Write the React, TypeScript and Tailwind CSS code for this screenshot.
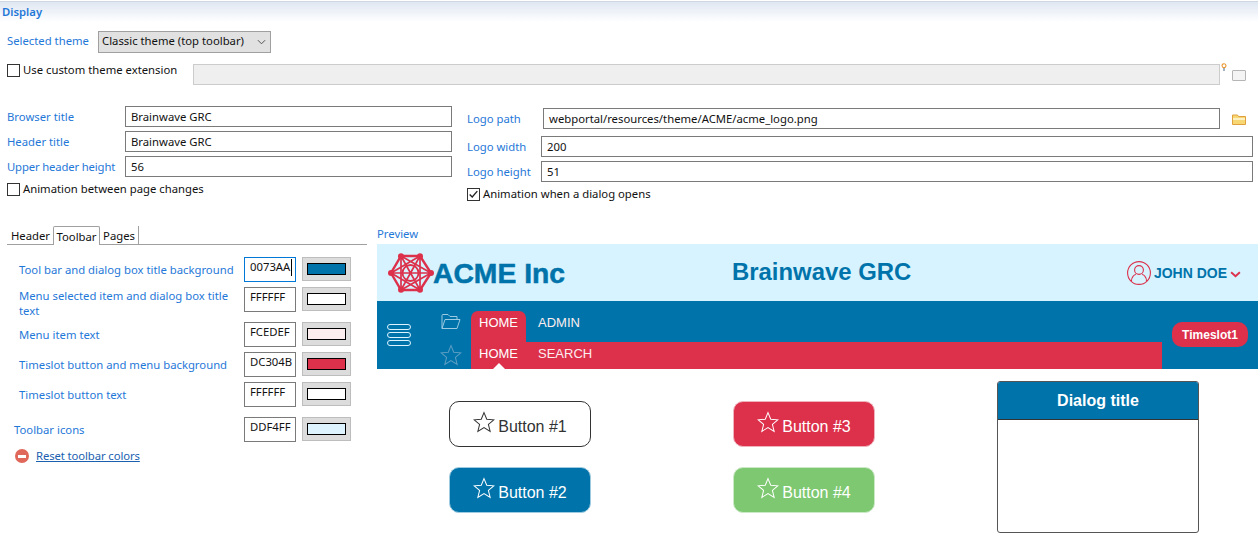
import React from 'react';

const LABEL = 'text-[#1f78d8]';

const StarIcon = ({ className }: { className?: string }) => (
  <svg viewBox="0 0 24 24" fill="none" stroke="currentColor" strokeWidth="1.1" className={className}>
    <path d="M12 1.8l3 7.2 7.7.6-5.9 5 1.9 7.6L12 18.2l-6.7 4 1.9-7.6-5.9-5 7.7-.6z" />
  </svg>
);

const Checkbox = ({ checked }: { checked?: boolean }) => (
  <span className="flex h-[13px] w-[13px] shrink-0 items-center justify-center border border-[#333] bg-white">
    {checked && (
      <svg viewBox="0 0 13 13" className="h-[11px] w-[11px]" fill="none" stroke="#222" strokeWidth="1.6">
        <path d="M2 6.5l3 3 6-7" />
      </svg>
    )}
  </span>
);

const CheckRow = ({ label, checked, className }: { label: string; checked?: boolean; className?: string }) => (
  <div className={`flex h-[13px] items-center gap-[3px] ${className ?? ''}`}>
    <Checkbox checked={checked} />
    <span className="mb-[2px] whitespace-nowrap text-[#111]">{label}</span>
  </div>
);

const TextRow = ({ label, value, labelWidth, className }: { label: string; value: string; labelWidth: string; className?: string }) => (
  <div className={`flex items-center ${className ?? ''}`}>
    <span className={`${labelWidth} shrink-0 whitespace-nowrap ${LABEL}`}>{label}</span>
    <div className="flex h-[21px] min-w-0 flex-1 items-center border border-[#7a7a7a] pl-[5px] text-[#111]">{value}</div>
  </div>
);

const ColorRow = ({ label, value, color, focused, indent, top, labelPad }: { label: string; value: string; color: string; focused?: boolean; indent: string; top: string; labelPad: string }) => (
  <div className={`flex h-[25px] items-start ${top}`}>
    <div className={`w-[237px] shrink-0 leading-[15px] ${indent} ${labelPad} ${LABEL}`}>{label}</div>
    <div className={`flex h-[25px] w-[52px] shrink-0 items-start border pl-[5px] pt-px text-[#111] ${focused ? 'border-[#0078d7]' : 'border-[#7a7a7a]'}`}>
      {value}
      {focused && <span className="ml-px h-[17px] w-px bg-black" />}
    </div>
    <div className="ml-[6px] flex h-[24px] w-[49px] shrink-0 items-center justify-center border border-[#bdbdbd] bg-[#dcdcdc]">
      <div className={`h-[12px] w-[39px] border border-black ${color}`} />
    </div>
  </div>
);

const PreviewButton = ({ label, className }: { label: string; className: string }) => (
  <div className={`flex h-[46px] w-[142px] items-start justify-center rounded-[10px] border text-[16px] leading-[20px] ${className}`}>
    <StarIcon className="mr-[3px] mt-[9px] h-[22px] w-[22px]" />
    <span className="mt-[15px]">{label}</span>
  </div>
);

const AcmeLogo = () => (
  <svg viewBox="0 0 46 40" className="h-[40px] w-[46px] shrink-0" fill="none" stroke="#DC304B" strokeWidth="1.7">
    <path d="M13 3H32L43 20L32 37H13L3 20Z" strokeWidth="2.4" />
    <path d="M13 3L32 37M32 3L13 37M3 20H43M13 3L43 20M32 3L3 20M3 20L32 37M43 20L13 37M13 3V37M32 3V37" />
    <circle cx="22.5" cy="20" r="8" strokeWidth="1.8" />
    <g fill="#DC304B" stroke="none">
      <circle cx="13" cy="3.2" r="3" />
      <circle cx="32" cy="3.2" r="3" />
      <circle cx="43" cy="20" r="3" />
      <circle cx="32" cy="36.8" r="3" />
      <circle cx="13" cy="36.8" r="3" />
      <circle cx="3" cy="20" r="3" />
    </g>
  </svg>
);

const Preview = () => (
  <div className="ml-[10px] w-[881px] shrink-0 font-['Liberation_Sans',Arial,sans-serif]">
    <div className={`h-[19px] font-['Noto_Sans',sans-serif] text-[11.3px] leading-[17px] ${LABEL}`}>Preview</div>
    <div className="relative flex h-[57px] items-center bg-[#D7F3FF] pl-[11px]">
      <AcmeLogo />
      <span className="ml-[-1px] w-[299px] whitespace-nowrap text-[28.3px] font-bold text-[#0073AA] [-webkit-text-stroke:0.5px_#0073AA]">ACME Inc</span>
      <span className="mb-[2px] whitespace-nowrap text-[23.9px] font-bold text-[#0073AA]">Brainwave GRC</span>
      <div className="ml-auto mr-[17px] flex items-center">
        <svg viewBox="0 0 24 24" className="h-[24px] w-[24px]" fill="none" stroke="#DC304B" strokeWidth="1.1">
          <circle cx="12" cy="12" r="11.4" />
          <circle cx="12" cy="9" r="4.4" />
          <path d="M4.5 20c0-4.5 3-6.5 4.5-6.5M19.5 20c0-4.5-3-6.5-4.5-6.5" />
        </svg>
        <span className="ml-[3px] text-[14px] font-bold text-[#0073AA]">JOHN DOE</span>
        <svg viewBox="0 0 12 8" className="ml-[3px] mt-[3px] h-[7px] w-[11px]" fill="none" stroke="#DC304B" strokeWidth="2.2">
          <path d="M1 1.5l5 4.5 5-4.5" />
        </svg>
      </div>
    </div>
    <div className="flex h-[68px] bg-[#0073AA]">
      <div className="flex w-[64px] shrink-0 flex-col items-start justify-center gap-[2px] pl-[10px]">
        <span className="h-[6px] w-[24px] rounded-full border border-[#DDF4FF]" />
        <span className="h-[6px] w-[24px] rounded-full border border-[#DDF4FF]" />
        <span className="h-[6px] w-[24px] rounded-full border border-[#DDF4FF]" />
      </div>
      <div className="flex w-[30px] shrink-0 flex-col pt-[12px]">
        <svg viewBox="0 0 20 17" className="h-[17px] w-[20px]" fill="none" stroke="#9CCBE2" strokeWidth="1">
          <path d="M1 15.5V2.5a1 1 0 011-1h5l2 2h7v3M1 15.5l3-9h15l-3 9z" />
        </svg>
        <StarIcon className="ml-[-1px] mt-[14px] h-[22px] w-[22px] text-[#5D9FC4]" />
      </div>
      <div className="flex min-w-0 flex-1 flex-col pt-[10px]">
        <div className="flex h-[31px] items-start text-[13px] leading-[20px] text-[#FCEDEF]">
          <span className="flex h-[31px] w-[55px] justify-center rounded-t-[7px] bg-[#DC304B] pt-[2px] text-white">HOME</span>
          <span className="ml-[12px] pt-[2px]">ADMIN</span>
        </div>
        <div className="relative flex h-[27px] w-[691px] items-start bg-[#DC304B] pt-[2px] text-[13px] leading-[20px] text-[#FCEDEF]">
          <span className="flex w-[55px] justify-center text-white">HOME</span>
          <span className="ml-[12px]">SEARCH</span>
          <span className="absolute bottom-0 left-[22px] h-0 w-0 border-x-[6px] border-b-[6px] border-x-transparent border-b-white" />
        </div>
      </div>
      <div className="mr-[10px] mt-[21px] flex h-[25px] w-[76px] items-center justify-center rounded-[10px] bg-[#DC304B] text-[12px] font-bold text-white">Timeslot1</div>
    </div>
    <div className="flex pt-[12px]">
      <div className="ml-[72px] flex flex-col gap-[20px] pt-[20px]">
        <PreviewButton label="Button #1" className="border-[#333] text-[#333]" />
        <PreviewButton label="Button #2" className="border-[#9fcbe0] bg-[#0073AA] text-white" />
      </div>
      <div className="ml-[142px] flex flex-col gap-[20px] pt-[20px]">
        <PreviewButton label="Button #3" className="border-[#f0b3bd] bg-[#DC304B] text-white" />
        <PreviewButton label="Button #4" className="border-[#cbe9c6] bg-[#7DC870] text-white" />
      </div>
      <div className="ml-[122px] h-[152px] w-[202px] overflow-hidden rounded-[3px] border border-[#555]">
        <div className="flex h-[38px] items-center justify-center border-b border-[#333] bg-[#0073AA] text-[16px] font-bold text-white">Dialog title</div>
      </div>
    </div>
  </div>
);

const ToolbarTabs = () => (
  <div className="w-[360px] shrink-0">
    <div className="flex h-[19px] items-end border-b border-[#a0a0a0] pl-[1px] text-[#111]">
      <span className="flex h-[18px] w-[45px] items-center justify-center pt-[2px]">Header</span>
      <span className="flex h-[19px] w-[47px] translate-y-px items-center justify-center rounded-t-[2px] border-x border-t border-[#a0a0a0] bg-white pt-px">Toolbar</span>
      <span className="flex h-[18px] w-[39px] items-center justify-center border-r border-[#a0a0a0] pt-[2px]">Pages</span>
    </div>
    <ColorRow top="mt-[12px]" indent="pl-[12px]" labelPad="pt-[5px]" label="Tool bar and dialog box title background" value="0073AA" color="bg-[#0073AA]" focused />
    <ColorRow top="mt-[5px]" indent="pl-[12px]" labelPad="pt-[1px]" label="Menu selected item and dialog box title text" value="FFFFFF" color="bg-white" />
    <ColorRow top="mt-[10px]" indent="pl-[12px]" labelPad="pt-[5px]" label="Menu item text" value="FCEDEF" color="bg-[#FCEDEF]" />
    <ColorRow top="mt-[5px]" indent="pl-[12px]" labelPad="pt-[5px]" label="Timeslot button and menu background" value="DC304B" color="bg-[#DC304B]" />
    <ColorRow top="mt-[5px]" indent="pl-[12px]" labelPad="pt-[5px]" label="Timeslot button text" value="FFFFFF" color="bg-white" />
    <ColorRow top="mt-[10px]" indent="pl-[7px]" labelPad="pt-[5px]" label="Toolbar icons" value="DDF4FF" color="bg-[#DDF4FF]" />
    <div className="ml-[8px] mt-[6px] flex items-center gap-[7px]">
      <span className="relative flex h-[14px] w-[14px] items-center justify-center rounded-full bg-[#e0685a]">
        <span className="h-[3px] w-[8px] bg-white" />
      </span>
      <span className="tracking-[-0.1px] text-[#1b5fb0] underline">Reset toolbar colors</span>
    </div>
  </div>
);

export default function App() {
  return (
    <div className="h-[552px] w-[1258px] overflow-hidden bg-white pt-px font-['Noto_Sans',sans-serif] text-[11.3px] leading-[16px]">
      <div className="h-[21px] border-t border-t-[#cfd8e2] bg-gradient-to-b from-[#dfe7f2] to-white pl-[2px] pt-[2px] font-semibold text-[#1f78d8]">Display</div>

      <div className="mt-[9px] flex h-[22px] items-center pl-[7px]">
        <span className={`mb-[2px] w-[91px] ${LABEL}`}>Selected theme</span>
        <div className="flex h-[22px] w-[173px] items-center justify-between border border-[#a0a0a0] bg-[#e1e1e1] pl-[3px] pr-[4px] text-[#111]">
          <span className="mb-[2px]">Classic theme (top toolbar)</span>
          <svg viewBox="0 0 10 6" className="h-[6px] w-[9px]" fill="none" stroke="#444" strokeWidth="1"><path d="M1 1l4 4 4-4" /></svg>
        </div>
      </div>

      <div className="mt-[11px] flex items-start pl-[7px]">
        <CheckRow label="Use custom theme extension" className="w-[186px]" />
        <div className="h-[21px] w-[1027px] shrink-0 border border-[#ccc] bg-[#efefef]" />
        <svg viewBox="0 0 6 9" className="ml-px mt-[-1px] h-[8px] w-[6px]" fill="none" stroke="#e8962e" strokeWidth="1.2"><circle cx="3" cy="3" r="2.2" /><path d="M3 5.5V9" stroke="#56708a" /></svg>
        <div className="ml-[5px] mt-[6px] h-[11px] w-[14px] rounded-[1px] border border-[#b5b5b5] bg-[#f4f4f4]" />
      </div>

      <div className="mt-[21px] flex items-start">
        <div className="ml-[7px] w-[445px] shrink-0">
          <TextRow label="Browser title" value="Brainwave GRC" labelWidth="w-[118px]" />
          <TextRow label="Header title" value="Brainwave GRC" labelWidth="w-[118px]" className="mt-[4px]" />
          <TextRow label="Upper header height" value="56" labelWidth="w-[118px] tracking-[-0.15px]" className="mt-[4px]" />
          <CheckRow label="Animation between page changes" className="mt-[6px]" />
        </div>
        <div className="ml-[15px] mt-[2px] w-[786px] shrink-0">
          <div className="flex items-center">
            <span className={`w-[76px] shrink-0 ${LABEL}`}>Logo path</span>
            <div className="flex h-[21px] w-[677px] items-center border border-[#7a7a7a] pl-[5px] text-[#111]">webportal/resources/theme/ACME/acme_logo.png</div>
            <svg viewBox="0 0 14 11" className="ml-[12px] mt-[2px] h-[11px] w-[14px]">
              <path d="M.5 10.5V1h5l1 1.5h7v8z" fill="#f7d774" stroke="#e0a13c" />
              <path d="M1 5h12" stroke="#fdf1c4" strokeWidth="2" />
            </svg>
          </div>
          <TextRow label="Logo width" value="200" labelWidth="w-[74px]" className="mt-[7px]" />
          <TextRow label="Logo height" value="51" labelWidth="w-[74px]" className="mt-[4px]" />
          <CheckRow checked label="Animation when a dialog opens" className="mt-[6px]" />
        </div>
      </div>

      <div className="mt-[24px] flex items-start pl-[7px]">
        <div className="mt-px"><ToolbarTabs /></div>
        <Preview />
      </div>
    </div>
  );
}
